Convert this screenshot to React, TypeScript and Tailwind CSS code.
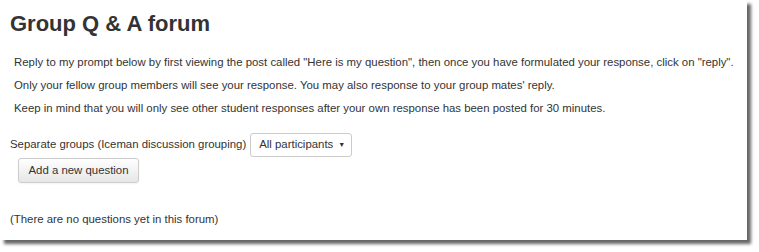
export default function App() {
  const font = { fontFamily: '"Liberation Sans", Arial, sans-serif' };
  return (
    <div className="w-[759px] h-[252px] bg-white" style={font}>
      <div className="w-[747px] h-[240px] bg-white shadow-[4px_4px_3px_rgba(0,0,0,0.6)] pt-[10px] text-[#333]">
        <h1 className="pl-[10px] text-[22px] leading-[28px] font-bold text-[#333]">Group Q &amp; A forum</h1>
        <div className="pl-[14px] mt-[13px] text-[11.4px] leading-[23px] text-[#333]">
          <p>Reply to my prompt below by first viewing the post called "Here is my question", then once you have formulated your response, click on "reply".</p>
          <p>Only your fellow group members will see your response. You may also response to your group mates' reply.</p>
          <p>Keep in mind that you will only see other student responses after your own response has been posted for 30 minutes.</p>
        </div>
        <div className="pl-[10px] mt-[13px] flex items-center text-[11.4px]">
          <span>Separate groups (Iceman discussion grouping)</span>
          <div className="ml-[4px] w-[102px] h-[24px] border border-[#ccc] rounded-[3px] bg-white flex items-center justify-between pl-[8px] pr-[6px]">
            <span>All participants</span>
            <span className="text-[7px]">▼</span>
          </div>
        </div>
        <div className="pl-[18px] mt-0">
          <button className="w-[121px] h-[25px] border border-[#ccc] rounded-[3px] bg-gradient-to-b from-white to-[#e6e6e6] text-[11.4px] text-[#333] shadow-[0_1px_2px_rgba(0,0,0,0.05)]">Add a new question</button>
        </div>
        <p className="pl-[10px] mt-[28px] text-[11.4px]">(There are no questions yet in this forum)</p>
      </div>
    </div>
  );
}
